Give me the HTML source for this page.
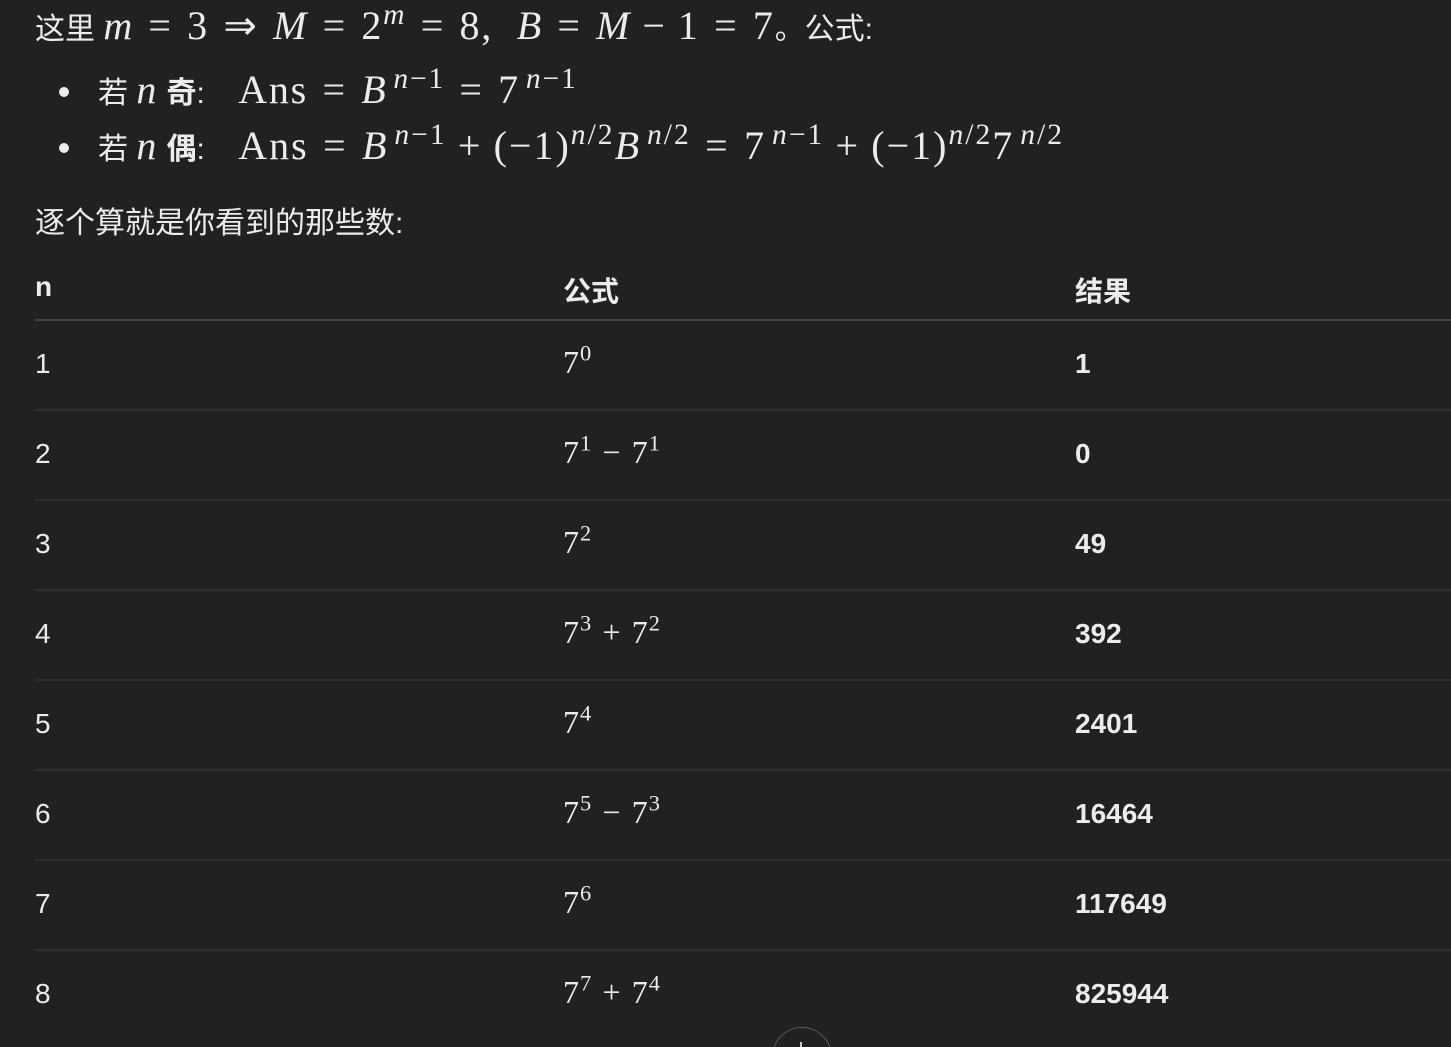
<!DOCTYPE html>
<html style="overflow:hidden;height:1047px"><head><meta charset="utf-8"><style>
body{margin:0;background:#212121;color:#ececec;width:1451px;height:1047px;overflow:hidden;position:relative;font-family:"Liberation Sans","Noto Sans CJK SC",sans-serif}
.a{position:absolute;white-space:nowrap}
.t{font-size:30px}
.m{font-family:"Liberation Serif",serif;font-size:40px;letter-spacing:1.8px}
.m i{font-style:italic}
.r{margin:0 .36em}
.o{margin:0 .28em}
sup{font-size:0.74em;vertical-align:0.5em;line-height:0}
sup.g{margin-left:.2em}
.c{font-size:28px}
.b{font-weight:bold}
.hl{position:absolute;left:35px;right:0;height:2px;background:#444}
.rl{position:absolute;left:35px;right:0;height:2px;background:#2f2f2f}
.dot{position:absolute;width:10px;height:10px;border-radius:50%;background:#ececec}
.f{font-family:"Liberation Serif",serif;font-size:32px;letter-spacing:1px}
.f sup{font-size:0.7em;vertical-align:0.55em}
.f .o{margin:0 .32em}
</style></head><body>
<div class="a t" style="left:35px;top:2px">这里 <span class="m"><i>m</i><span class="r">=</span>3<span class="r">⇒</span><i>M</i><span class="r">=</span>2<sup><i>m</i></sup><span class="r">=</span>8,&nbsp; <i>B</i><span class="r">=</span><i>M</i><span class="o">−</span>1<span class="r">=</span>7</span>。公式:</div>
<div class="dot" style="left:59px;top:87px"></div>
<div class="a t" style="left:98px;top:66px">若 <span class="m"><i>n</i></span> <b>奇</b>:&nbsp;&nbsp;&nbsp; <span class="m">Ans<span class="r">=</span><i>B</i><sup class="g"><i>n</i>−1</sup><span class="r">=</span>7<sup class="g"><i>n</i>−1</sup></span></div>
<div class="dot" style="left:59px;top:143px"></div>
<div class="a t" style="left:98px;top:122px">若 <span class="m"><i>n</i></span> <b>偶</b>:&nbsp;&nbsp;&nbsp; <span class="m" style="letter-spacing:2px">Ans<span class="r">=</span><i>B</i><sup class="g"><i>n</i>−1</sup><span class="o">+</span>(−1)<sup><i>n</i>/2</sup><i>B</i><sup class="g"><i>n</i>/2</sup><span class="r">=</span>7<sup class="g"><i>n</i>−1</sup><span class="o">+</span>(−1)<sup><i>n</i>/2</sup>7<sup class="g"><i>n</i>/2</sup></span></div>
<div class="a t" style="left:35px;top:198px">逐个算就是你看到的那些数:</div>

<div class="a c b" style="left:35px;top:271px">n</div>
<div class="a c b" style="left:563px;top:270px">公式</div>
<div class="a c b" style="left:1075px;top:270px">结果</div>
<div class="hl" style="top:319px"></div>

<div class="a c" style="left:35px;top:348px">1</div><div class="a f" style="left:563px;top:344px">7<sup>0</sup></div><div class="a c b" style="left:1075px;top:348px">1</div><div class="rl" style="top:409px"></div>
<div class="a c" style="left:35px;top:438px">2</div><div class="a f" style="left:563px;top:434px">7<sup>1</sup><span class="o">−</span>7<sup>1</sup></div><div class="a c b" style="left:1075px;top:438px">0</div><div class="rl" style="top:499px"></div>
<div class="a c" style="left:35px;top:528px">3</div><div class="a f" style="left:563px;top:524px">7<sup>2</sup></div><div class="a c b" style="left:1075px;top:528px">49</div><div class="rl" style="top:589px"></div>
<div class="a c" style="left:35px;top:618px">4</div><div class="a f" style="left:563px;top:614px">7<sup>3</sup><span class="o">+</span>7<sup>2</sup></div><div class="a c b" style="left:1075px;top:618px">392</div><div class="rl" style="top:679px"></div>
<div class="a c" style="left:35px;top:708px">5</div><div class="a f" style="left:563px;top:704px">7<sup>4</sup></div><div class="a c b" style="left:1075px;top:708px">2401</div><div class="rl" style="top:769px"></div>
<div class="a c" style="left:35px;top:798px">6</div><div class="a f" style="left:563px;top:794px">7<sup>5</sup><span class="o">−</span>7<sup>3</sup></div><div class="a c b" style="left:1075px;top:798px">16464</div><div class="rl" style="top:859px"></div>
<div class="a c" style="left:35px;top:888px">7</div><div class="a f" style="left:563px;top:884px">7<sup>6</sup></div><div class="a c b" style="left:1075px;top:888px">117649</div><div class="rl" style="top:949px"></div>
<div class="a c" style="left:35px;top:978px">8</div><div class="a f" style="left:563px;top:974px">7<sup>7</sup><span class="o">+</span>7<sup>4</sup></div><div class="a c b" style="left:1075px;top:978px">825944</div>

<div style="position:absolute;left:772px;top:1027px;width:58px;height:58px;border-radius:50%;border:1.5px solid #555;background:#212121"></div>
<div style="position:absolute;left:800px;top:1042px;width:2px;height:6px;background:#ccc"></div>
</body></html>
